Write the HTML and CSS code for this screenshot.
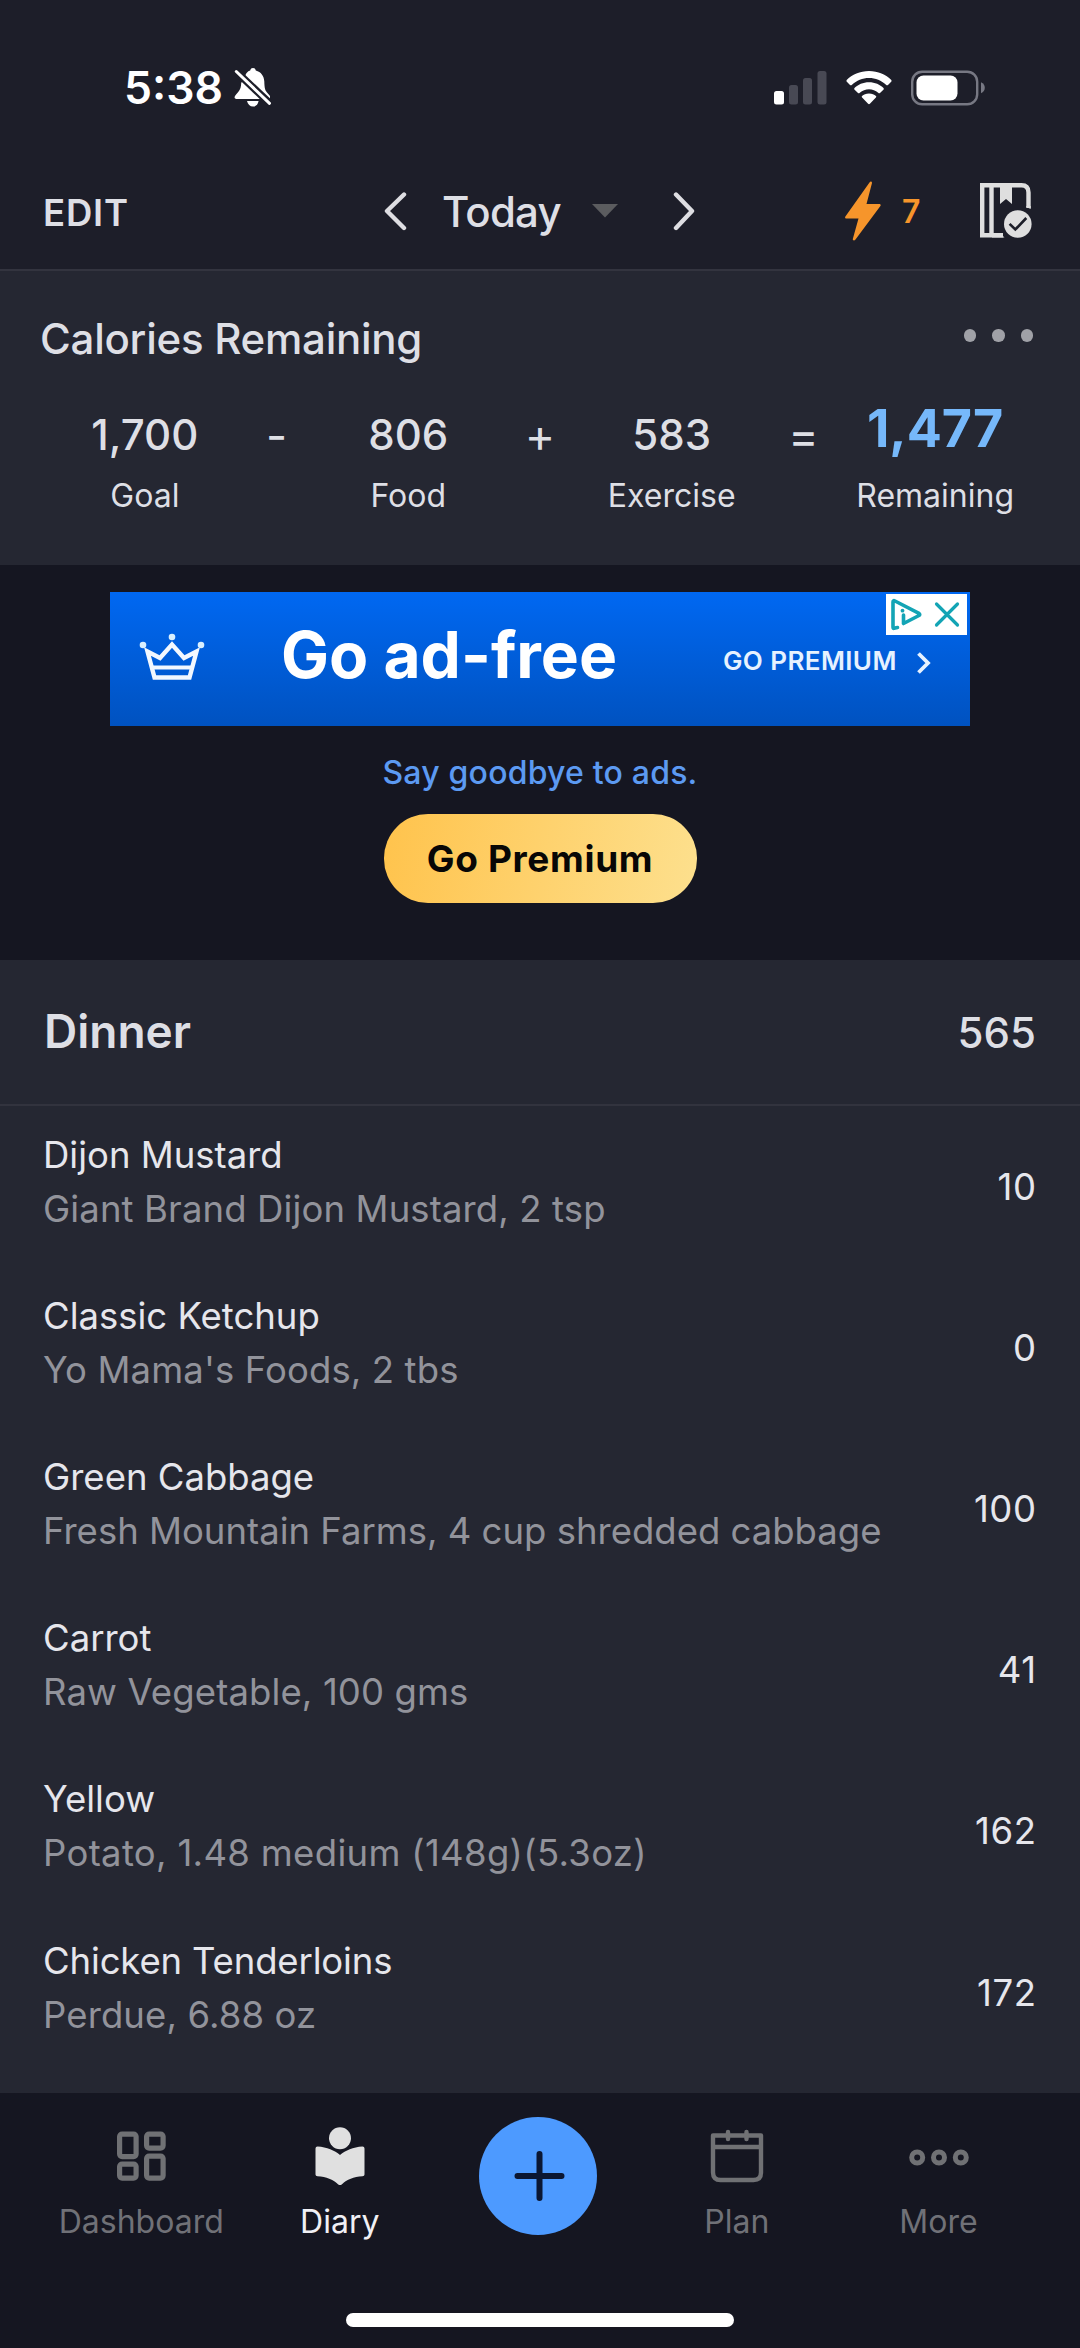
FILE: index.html
```html
<!DOCTYPE html>
<html lang="en">
<head>
<meta charset="utf-8">
<title>Diary</title>
<link rel="stylesheet" href="styles.css">
</head>
<body>
<div class="app">
  <header class="header">
    <div class="status">
      <span class="clock">5:38</span>
      <svg class="bell" width="38" height="40" viewBox="0 0 38 40">
        <path fill="#fff" d="M11 9C12 4.500 14.500 3 16.200 2.600C16.500 .8 17.500 0 19 0S21.500 .8 21.800 2.600C27 4 30 8 30.300 13.500C30.500 20 31 22 33 24.500L36 28V31H2.500C.8 31 0 29.500 1 28C4 24 7 22.500 7.200 15ZM13 33H24.600C24 36.500 22 38.500 19 38.500S13.800 36.500 13 33Z"/>
        <path stroke="#1d1e29" stroke-width="7.500" d="M-1 .5L38 37.500"/>
        <path stroke="#fff" stroke-width="3" stroke-linecap="round" d="M2.300 3.500L35.500 35.300"/>
      </svg>
      <div class="status-icons">
        <svg width="53" height="34" viewBox="0 0 53 34">
          <rect x="0" y="20" width="10" height="13.500" rx="2.500" fill="#fff"/>
          <g fill="#484954"><rect x="15" y="14" width="9" height="19.500" rx="2.500"/><rect x="29" y="7" width="9" height="26.500" rx="2.500"/><rect x="43.500" y="0" width="9" height="33.500" rx="2.500"/></g>
        </svg>
        <svg class="wifi" width="46" height="34" viewBox="0 0 46 34">
          <g fill="#fff"><path d="M23 0C32 0 40 3.500 45.300 9Q46 10 45.200 10.800L42 14Q41 14.700 40 13.800C35.500 9.500 29.500 7 23 7S10.500 9.500 6 13.800Q5 14.700 4 14L.8 10.800Q0 10 .7 9C6 3.500 14 0 23 0Z"/><path d="M23 11.200C29 11.200 34 13.500 37.500 17Q38.300 18 37.400 18.800L34 22Q33.200 22.700 32.200 21.800C29.500 19.500 26.500 18.200 23 18.200S16.500 19.500 13.800 21.800Q12.800 22.700 12 22L8.600 18.800Q7.700 18 8.500 17C12 13.500 17 11.200 23 11.200Z"/><path d="M23 22.500C26 22.500 28.300 23.500 30 25Q30.700 25.800 29.900 26.600L23.900 32.800Q23 33.600 22.100 32.800L16.100 26.600Q15.300 25.800 16 25C17.700 23.500 20 22.500 23 22.500Z"/></g>
        </svg>
        <svg class="battery" width="74" height="36" viewBox="0 0 74 36">
          <rect x="1.200" y="1.700" width="65" height="32.600" rx="10" fill="none" stroke="#777883" stroke-width="2.400"/>
          <rect x="5.500" y="5.500" width="41" height="25" rx="7" fill="#fff"/>
          <path fill="#777883" d="M70 12.300C72.500 13.300 73.800 15.500 73.800 17.800S72.500 22.300 70 23.300Z"/>
        </svg>
      </div>
    </div>
    <nav class="topbar">
      <span class="edit">EDIT</span>
      <svg class="prev" width="24" height="40" viewBox="0 0 24 40"><path fill="none" stroke="#dedee2" stroke-width="4.400" stroke-linecap="round" stroke-linejoin="round" d="M20 3.500L3 20L20 37"/></svg>
      <span class="today">Today</span>
      <svg class="caret" width="26" height="14" viewBox="0 0 26 14"><path fill="#5b5c5f" d="M0 0H26L13 13.500Z"/></svg>
      <svg class="next" width="24" height="40" viewBox="0 0 24 40"><path fill="none" stroke="#dedee2" stroke-width="4.400" stroke-linecap="round" stroke-linejoin="round" d="M4 3.500L20 20L4 37"/></svg>
      <svg class="bolt" width="36" height="60" viewBox="0 0 36 60"><path fill="#f6952b" d="M24.500 1.500C25.500 0 27 .5 27 2L21.500 23H34.300C35.500 23 36 24 35.400 25L10.500 58.500C9.500 60 7.500 59.800 7.800 58L13.500 37.500H1.500C.2 37.500-.3 36.500 .4 35.500Z"/></svg>
      <span class="streak">7</span>
      <svg class="book" width="53" height="56" viewBox="0 0 53 56">
        <g fill="none" stroke="#dfdfdf" stroke-width="4.400"><path d="M48.500 25V9.500Q48.500 2.200 41.500 2.200H2.200V52.300H23M11.500 2V52"/></g>
        <path fill="#dfdfdf" d="M20 2H32V21L26 16L20 21ZM12 50H20L24.500 54.500H12ZM46.300 24L50.700 26V23H46.300Z"/>
        <circle cx="37.800" cy="41" r="13.800" fill="#dfdfdf"/>
        <path fill="none" stroke="#1d1e29" stroke-width="2.600" d="M29.600 40.800L35.300 46.500L46.300 35"/>
      </svg>
    </nav>
  </header>

  <section class="summary">
    <div class="summary-head">
      <h1>Calories Remaining</h1>
      <div class="dots"><i></i><i></i><i></i></div>
    </div>
    <div class="equation">
      <div class="term"><b>1,700</b><span>Goal</span></div>
      <div class="sign">-</div>
      <div class="term"><b>806</b><span>Food</span></div>
      <div class="sign">+</div>
      <div class="term"><b>583</b><span>Exercise</span></div>
      <div class="sign">=</div>
      <div class="term total"><b>1,477</b><span>Remaining</span></div>
    </div>
  </section>

  <section class="promo">
    <div class="banner">
      <svg class="crown" width="66" height="50" viewBox="0 0 66 50">
        <g fill="none" stroke="#f2f8ff" stroke-width="4.400"><path d="M8.500 19.500L15.500 45.500H50.500L57.500 19.500L45 26L33 12.500L21 26Z"/><path d="M13 35.500H53" stroke-width="4"/></g>
        <g fill="#d9f0ff"><circle cx="4" cy="13" r="3.300"/><circle cx="33" cy="5" r="3.300"/><circle cx="62" cy="13" r="3.300"/></g>
      </svg>
      <span class="ad-title">Go ad-free</span>
      <span class="ad-cta">GO PREMIUM</span>
      <svg class="ad-chev" width="16" height="24" viewBox="0 0 16 24"><path fill="none" stroke="#e6f2ff" stroke-width="3.800" d="M2.500 2.500L12 12L2.500 21.500"/></svg>
      <div class="ad-choices">
        <svg width="81" height="41" viewBox="0 0 81 41">
          <g fill="none" stroke="#13a4b5" stroke-width="3.600" stroke-linejoin="round"><path stroke-linecap="round" d="M11.500 33.500L8 34.300Q7 34.500 7 33V8Q7 6 9 7L33 19.300Q34.500 20.500 33 21.500L17.500 29.500V21"/><path stroke-linecap="round" stroke-width="3.200" d="M50.500 10L71.500 31M71.500 10L50.500 31"/></g>
          <circle cx="16.500" cy="16.700" r="1.900" fill="#13a4b5"/>
        </svg>
      </div>
    </div>
    <p class="goodbye">Say goodbye to ads.</p>
    <button class="premium">Go Premium</button>
  </section>

  <section class="meal">
    <div class="meal-head"><h2>Dinner</h2><span>565</span></div>
    <ul class="foods">
      <li><div><h3>Dijon Mustard</h3><p>Giant Brand Dijon Mustard, 2 tsp</p></div><span>10</span></li>
      <li><div><h3>Classic Ketchup</h3><p>Yo Mama's Foods, 2 tbs</p></div><span>0</span></li>
      <li><div><h3>Green Cabbage</h3><p class="long">Fresh Mountain Farms, 4 cup shredded cabbage</p></div><span>100</span></li>
      <li><div><h3>Carrot</h3><p>Raw Vegetable, 100 gms</p></div><span>41</span></li>
      <li><div><h3>Yellow</h3><p class="numeric">Potato, 1.48 medium (148g)(5.3oz)</p></div><span>162</span></li>
      <li><div><h3 class="tight">Chicken Tenderloins</h3><p>Perdue, 6.88 oz</p></div><span>172</span></li>
    </ul>
  </section>

  <footer class="tabs">
    <div class="tab-row">
      <div class="tab">
        <svg width="60" height="60" viewBox="0 0 60 60"><g fill="none" stroke="#707174" stroke-width="5.200"><rect x="8.600" y="8.100" width="16.500" height="22.500" rx="2.500"/><rect x="35.600" y="8.100" width="16.500" height="14" rx="2.500"/><rect x="8.600" y="38.100" width="16.500" height="14" rx="2.500"/><rect x="35.600" y="30.100" width="16.500" height="22" rx="2.500"/></g></svg>
        <span>Dashboard</span>
      </div>
      <div class="tab active">
        <svg width="60" height="60" viewBox="0 0 60 60"><g fill="#e0e0e0"><circle cx="30" cy="12.300" r="11"/><path d="M5.500 22.500Q5.500 20.500 7.500 20.500C17 21 24.500 24.500 30 29C35.500 24.500 43 21 52.500 20.500Q54.500 20.500 54.500 22.500V48.500Q54.500 50.300 52.500 50.300C43.500 50.800 37 53.500 32 58.200Q30 60 28 58.200C23 53.500 16.500 50.800 7.500 50.300Q5.500 50.300 5.500 48.500Z"/></g></svg>
        <span>Diary</span>
      </div>
      <div class="tab add"><svg width="118" height="118" viewBox="0 0 118 118"><circle cx="59" cy="59" r="59" fill="#4d9aff"/><path stroke="#0b1733" stroke-width="6" stroke-linecap="round" d="M38.500 59H82.500M60.500 37V81"/></svg></div>
      <div class="tab">
        <svg width="60" height="60" viewBox="0 0 60 60"><g fill="none" stroke="#707174" stroke-width="4.400"><path stroke-linejoin="round" d="M6 9.500H54V46.500Q54 54 46.500 54H13.500Q6 54 6 46.500ZM6 21H54"/><path stroke-linecap="round" d="M21 6V13M39.500 6V13"/></g></svg>
        <span>Plan</span>
      </div>
      <div class="tab last">
        <svg width="60" height="60" viewBox="0 0 60 60"><g fill="none" stroke="#707174" stroke-width="5"><circle cx="8.200" cy="31.500" r="5.500"/><circle cx="30" cy="31.500" r="5.500"/><circle cx="51.800" cy="31.500" r="5.500"/></g></svg>
        <span>More</span>
      </div>
    </div>
    <div class="home-bar"></div>
  </footer>
</div>
</body>
</html>
```
FILE: styles.css
```css
* { box-sizing: border-box; margin: 0; padding: 0; }
body { background: #151621; font-family: Inter, "Liberation Sans", sans-serif; color: #dedfe5; }
svg { display: block; flex: none; }
.app { width: 1080px; height: 2348px; display: flex; flex-direction: column; white-space: nowrap; overflow: hidden; }

.header { height: 271px; background: #1d1e29; border-bottom: 2px solid #33343f; }
.status { height: 176px; display: flex; align-items: center; padding-left: 124px; }
.clock { width: 110px; font-size: 44.500px; font-weight: 600; color: #fff; }
.status-icons { display: flex; align-items: center; margin-left: 502px; }
.wifi { margin-left: 19px; }
.battery { margin-left: 19px; }
.topbar { height: 70px; display: flex; align-items: center; padding-left: 43px; }
.edit { width: 341px; font-size: 36.500px; font-weight: 600; padding-top: 4px; letter-spacing: 0.800px; }
.today { margin-left: 34px; width: 150px; font-size: 42px; font-weight: 500; letter-spacing: -0.800px; }
.next { margin-left: 54px; }
.bolt { margin-left: 149px; }
.streak { margin-left: 21px; width: 78px; font-size: 32px; font-weight: 600; color: #f6952b; }

.summary { height: 294px; background: #252732; padding-top: 37px; }
.summary-head { height: 60px; display: flex; align-items: center; justify-content: space-between; padding: 0 47px 0 40px; }
.summary-head h1 { font-size: 42px; font-weight: 500; letter-spacing: -0.250px; }
.dots { display: flex; gap: 16px; padding-bottom: 5px; }
.dots i { width: 12.500px; height: 12.500px; border-radius: 50%; background: #a0a1a7; }
.equation { display: grid; grid-template-columns: repeat(7, minmax(0, 1fr)); padding: 37px 79px 0; }
.term { display: flex; flex-direction: column; align-items: center; }
.term b, .sign { font-size: 42px; font-weight: 500; line-height: 60px; }
.sign { text-align: center; font-weight: 400; font-size: 46px; }
.term span { font-size: 32px; line-height: 40px; margin-top: 11px; }
.total b { font-size: 52px; font-weight: 700; line-height: 48px; margin-bottom: 12px; color: #76b8fa; }

.promo { height: 395px; padding-top: 27px; display: flex; flex-direction: column; align-items: center; }
.banner { position: relative; width: 860px; height: 134px; background: linear-gradient(#0068f2, #0052c0); display: flex; align-items: center; color: #fff; }
.crown { margin: 0 0 5px 29px; }
.ad-title { margin-left: 76px; width: 442px; font-size: 64px; font-weight: 700; padding-bottom: 10px; }
.ad-cta { width: 189px; font-size: 26px; font-weight: 600; color: #e6f2ff; padding-top: 2px; letter-spacing: 0.400px; }
.ad-chev { margin-top: 7px; margin-left: 4px; }
.ad-choices { position: absolute; top: 2px; right: 3px; width: 81px; height: 41px; background: #fff; }
.goodbye { margin-top: 27px; font-size: 32px; line-height: 40px; font-weight: 500; color: #5c9af2; letter-spacing: 0.200px; }
.premium { margin-top: 21px; width: 313px; height: 89px; border: 0; border-radius: 44px; font: 700 37px/89px Inter, "Liberation Sans", sans-serif; letter-spacing: 0.650px; color: #080706; background: linear-gradient(100deg, #ffc34c, #fde08e); }

.meal { height: 1133px; background: #252732; }
.meal-head { height: 146px; border-bottom: 2px solid #32333e; display: flex; align-items: center; justify-content: space-between; padding: 0 44px; }
.meal-head h2 { font-size: 46px; font-weight: 600; padding-bottom: 2px; }
.meal-head span { font-size: 42px; font-weight: 500; }
.foods { list-style: none; }
.foods li { height: 161.200px; display: flex; align-items: center; justify-content: space-between; padding: 0 44px 0 43px; font-size: 36.500px; }
.foods div { padding-bottom: 10px; }
.foods h3, .foods p { font-size: 36.500px; font-weight: 400; line-height: 54px; }
.foods h3, .foods span { color: #e6e6ec; }
.foods span { letter-spacing: 0.600px; margin-right: -0.600px; }
.foods p { color: #92939b; letter-spacing: 0.120px; }
.foods .long { letter-spacing: 0; }
.foods .numeric { letter-spacing: 0.320px; }
.foods .tight { letter-spacing: -0.150px; }

.tabs { flex: 1; padding-top: 24px; display: flex; flex-direction: column; align-items: center; }
.tab-row { height: 196px; width: 100%; display: flex; padding-left: 42px; }
.tab { width: 198.500px; display: flex; flex-direction: column; align-items: center; padding-top: 9px; color: #707177; }
.tab span { font-size: 32px; line-height: 40px; margin-top: 16px; }
.last { width: 205px; }
.active { color: #f0f0f5; }
.add { padding-top: 0; }
.home-bar { width: 388px; height: 14px; border-radius: 7px; background: #fff; }
```
